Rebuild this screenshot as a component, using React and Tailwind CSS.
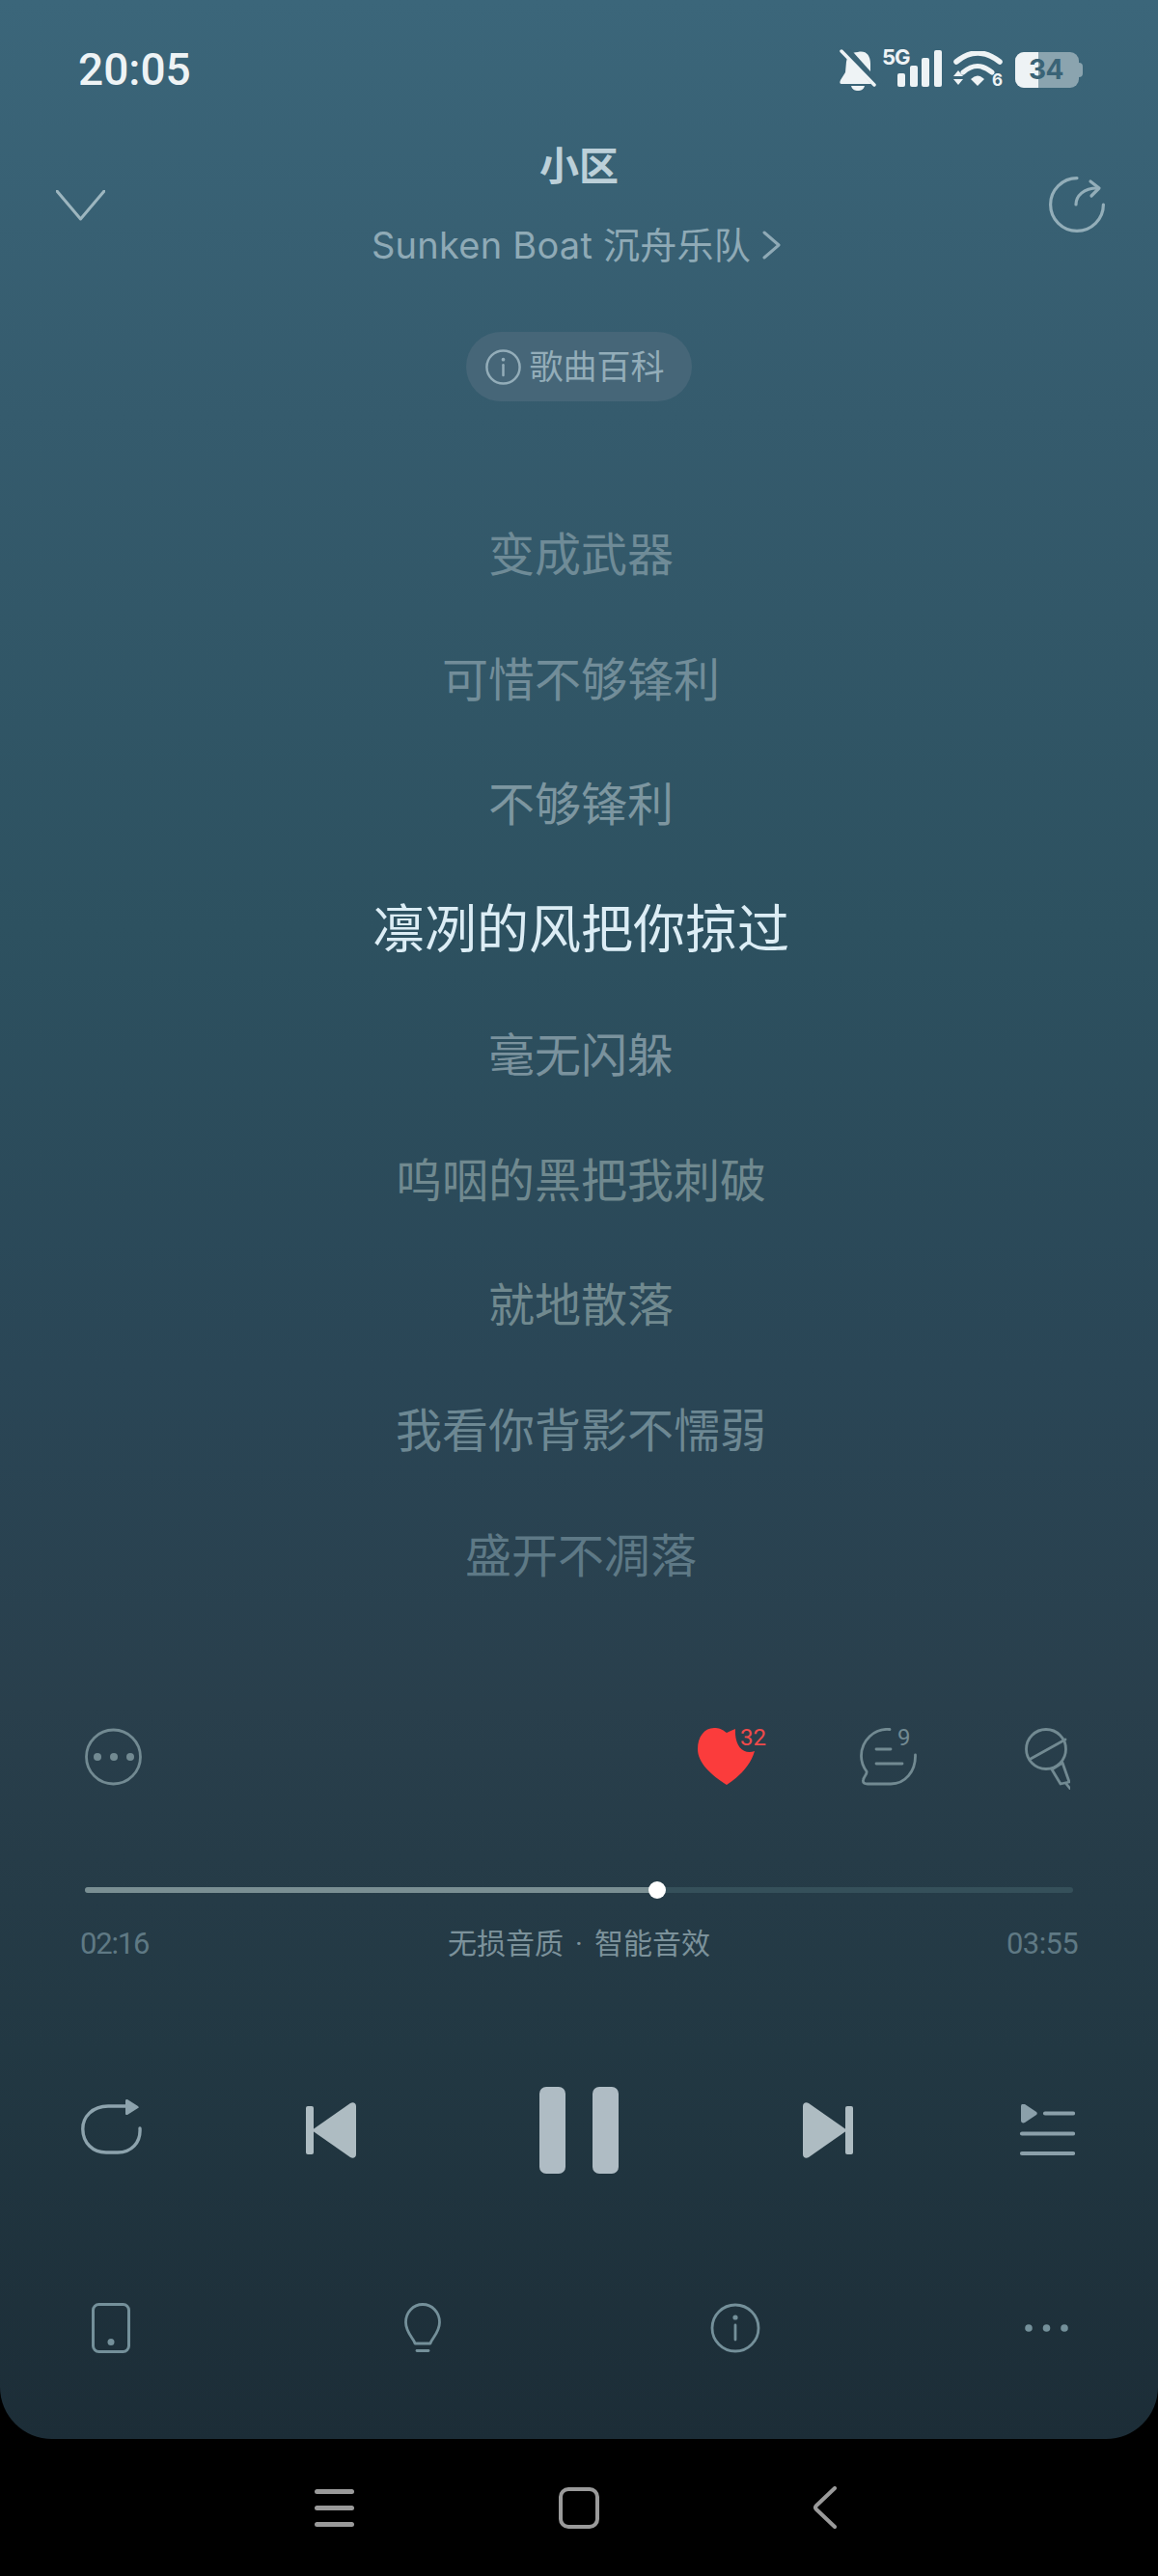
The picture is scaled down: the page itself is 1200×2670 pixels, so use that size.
import React from "react";

const FONT = "font-['Inter','Noto_Sans_CJK_SC',sans-serif]";

function BellOff() {
  return (
    <svg width="38" height="43" viewBox="0 0 38 43">
      <path d="M19 3C27 1 32 6 32 15L32 28L36 36L2 36C0 36 0 34 1 32L6 24L7 13C8 7 12 3 19 3Z" fill="#eef3f5" />
      <path d="M6 0L41 39" stroke="#3a6376" strokeWidth="8" />
      <path d="M2 2L36 37" stroke="#eef3f5" strokeWidth="3.5" strokeLinecap="round" />
      <path d="M12 38L26 38C25 42 22 43 19 43C16 43 13 42 12 38Z" fill="#eef3f5" />
    </svg>
  );
}

function Signal() {
  return (
    <div className="relative w-[62px] h-[40px]">
      <span className="absolute left-0 top-[-6px] text-[22px] leading-[26px] font-bold text-[#eef3f5] tracking-[-1px]">5G</span>
      <svg className="absolute left-0 top-0" width="62" height="40" viewBox="0 0 62 40">
        <rect x="16" y="24" width="8" height="14" rx="2" fill="#eef3f5" />
        <rect x="29" y="16" width="8" height="22" rx="2" fill="#eef3f5" />
        <rect x="41" y="8" width="8" height="30" rx="2" fill="#eef3f5" />
        <rect x="54" y="0" width="8" height="38" rx="2" fill="#eef3f5" />
      </svg>
    </div>
  );
}

function Wifi() {
  return (
    <div className="relative w-[51px] h-[38px]">
      <svg className="absolute left-0 top-0" width="51" height="38" viewBox="0 0 51 38">
        <path d="M3 11Q25 -7 48 11" fill="none" stroke="#eef3f5" strokeWidth="5.5" strokeLinecap="round" />
        <path d="M10 22Q25 9 40 22" fill="none" stroke="#eef3f5" strokeWidth="5" strokeLinecap="round" />
        <path d="M18 29Q25 22 32 29L25 36Z" fill="#eef3f5" />
        <path d="M5 20L10 26L0 26Z" fill="#eef3f5" />
        <path d="M0 29L10 29L5 35Z" fill="#eef3f5" />
      </svg>
      <span className="absolute left-[40px] top-[22px] text-[17px] leading-[17px] font-bold text-[#eef3f5]">6</span>
    </div>
  );
}

function Battery() {
  return (
    <div className="flex items-center">
      <div className="relative w-[66px] h-[37px] rounded-[9px] overflow-hidden bg-[#8ba4af] flex">
        <div className="w-[24px] h-full bg-[#eef3f5]" />
        <span className="absolute left-[14px] top-0 h-full flex items-center text-[28px] font-bold text-[#3a6376] tracking-[-0.5px]">34</span>
      </div>
      <div className="w-[4px] h-[15px] rounded-r-[4px] bg-[#8ba4af]" />
    </div>
  );
}

function Chevron() {
  return (
    <svg width="51" height="32" viewBox="0 0 51 32">
      <path d="M1 1L25.5 30L50 1" fill="none" stroke="#9db6bf" strokeWidth="3" strokeLinecap="round" strokeLinejoin="round" />
    </svg>
  );
}

function Share() {
  return (
    <svg width="58" height="58" viewBox="0 0 58 58" fill="none" stroke="#93aeb9" strokeWidth="3.2" strokeLinecap="round" strokeLinejoin="round">
      <path d="M29 1.6A27.4 27.4 0 1 0 56.4 29" />
      <path d="M28 29C28 20 36 12 50 12" />
      <path d="M43 5L52 12L44 20" />
    </svg>
  );
}

function Info({ size, color, sw }) {
  return (
    <svg width={size} height={size} viewBox="0 0 52 52" fill="none" stroke={color} strokeWidth={sw} strokeLinecap="round">
      <circle cx="26" cy="26" r="24" />
      <circle cx="26" cy="15" r="2.6" fill={color} stroke="none" />
      <path d="M26 23L26 38" />
    </svg>
  );
}

function More() {
  return (
    <svg width="59" height="60" viewBox="0 0 59 60">
      <circle cx="29.5" cy="30" r="28" fill="none" stroke="#728a92" strokeWidth="2.8" />
      <circle cx="13" cy="30" r="4" fill="#728a92" />
      <circle cx="30" cy="30" r="4" fill="#728a92" />
      <circle cx="47" cy="30" r="4" fill="#728a92" />
    </svg>
  );
}

function Heart() {
  return (
    <div className="relative w-[70px] h-[60px]">
      <svg className="absolute left-0 top-0" width="60" height="60" viewBox="0 0 60 60">
        <path d="M30 5C25 1 22 0 17 0C7 0 0 9 0 22C0 36 14 49 30 59C44 50 55 38 59 24C48 28 38 20 39 1Q34 3 30 5Z" fill="#fb3c3c" />
      </svg>
      <span className="absolute left-[44px] top-[-2px] text-[24px] leading-[24px] text-[#f04a4a] font-['Roboto',sans-serif]">32</span>
    </div>
  );
}

function Comment() {
  return (
    <div className="relative w-[59px] h-[60px]">
      <svg className="absolute left-0 top-0" width="59" height="60" viewBox="0 0 59 60" fill="none" stroke="#728a92" strokeWidth="2.8" strokeLinecap="round" strokeLinejoin="round">
        <path d="M31 1.5C15 0 1.5 13 1.5 29C1.5 36 4 41 7 45C8 48 4 50 3.5 54C3 57 5 58 8 58L32 58C47 58 58 45 57.5 28" />
        <path d="M17 22L32 22" />
        <path d="M17 37L44 37" />
      </svg>
      <span className="absolute left-[39px] top-[-2px] text-[24px] leading-[24px] text-[#728a92] font-['Roboto',sans-serif]">9</span>
    </div>
  );
}

function Mic() {
  return (
    <svg width="47" height="64" viewBox="0 0 47 64" fill="none" stroke="#728a92" strokeWidth="2.8" strokeLinecap="round" strokeLinejoin="round">
      <circle cx="22" cy="22" r="20.5" />
      <path d="M6 32L42 12" />
      <path d="M28 43L39 36L46 56L37 58Z" />
      <path d="M43 58L47 63" />
    </svg>
  );
}

function Repeat() {
  return (
    <svg width="63" height="57" viewBox="0 0 63 57">
      <path d="M47 7L28 7C12 7 1.5 18 1.8 31C2 45 12 55 26 55L38 55C52 55 62 45 61 30" fill="none" stroke="#8da3ad" strokeWidth="3.4" strokeLinecap="round" />
      <path d="M46 1C46 0 47 0 48 0L59 7C60 8 60 9 59 9L48 16C47 16 46 16 46 15Z" fill="#8da3ad" />
    </svg>
  );
}

function Prev() {
  return (
    <svg width="52" height="58" viewBox="0 0 52 58" fill="#aebcc2">
      <rect x="0" y="4" width="8" height="50" rx="2" />
      <path d="M6 29L46 1C49 -1 52 1 52 4L52 54C52 57 49 59 46 57Z" />
    </svg>
  );
}

function Next() {
  return (
    <svg width="52" height="58" viewBox="0 0 52 58" fill="#aebcc2">
      <rect x="44" y="4" width="8" height="50" rx="2" />
      <path d="M46 29L6 1C3 -1 0 1 0 4L0 54C0 57 3 59 6 57Z" />
    </svg>
  );
}

function Queue() {
  return (
    <svg width="58" height="54" viewBox="0 0 58 54">
      <path d="M2 2C2 0 4 -1 6 0L18 8C19 9 19 10 18 11L6 19C4 20 2 19 2 17Z" fill="#8ba0aa" />
      <g stroke="#8ba0aa" strokeWidth="4.2" strokeLinecap="round">
        <path d="M27 9.5L56 9.5" />
        <path d="M3 30.5L56 30.5" />
        <path d="M3 51L56 51" />
      </g>
    </svg>
  );
}

function Phone() {
  return (
    <svg width="40" height="52" viewBox="0 0 40 52">
      <rect x="1.5" y="1.5" width="37" height="49" rx="6" fill="none" stroke="#74909a" strokeWidth="3" />
      <circle cx="20" cy="40.5" r="3.5" fill="#74909a" />
    </svg>
  );
}

function Bulb() {
  return (
    <svg width="38" height="52" viewBox="0 0 38 52" fill="none" stroke="#74909a" strokeWidth="2.8" strokeLinecap="round" strokeLinejoin="round">
      <path d="M11 42C10 37 1.5 31 1.5 20C1.5 10 9 1.5 19 1.5C29 1.5 36.5 10 36.5 20C36.5 31 28 37 27 42Z" />
      <path d="M13 49.5L25 49.5" />
    </svg>
  );
}

function Dots() {
  return (
    <svg width="45" height="10" viewBox="0 0 45 10" fill="#74909a">
      <circle cx="4" cy="5" r="3.8" />
      <circle cx="22.5" cy="5" r="3.8" />
      <circle cx="41" cy="5" r="3.8" />
    </svg>
  );
}

const lyrics = [
  { t: "变成武器", c: "text-[#6f8b97]" },
  { t: "可惜不够锋利", c: "text-[#728d99]" },
  { t: "不够锋利", c: "text-[#7d96a0]" },
  { t: "凛冽的风把你掠过", c: "text-[#dcedf5] text-[54px]" },
  { t: "毫无闪躲", c: "text-[#7a929d]" },
  { t: "呜咽的黑把我刺破", c: "text-[#70898f]" },
  { t: "就地散落", c: "text-[#70898f]" },
  { t: "我看你背影不懦弱", c: "text-[#6d8893]" },
  { t: "盛开不凋落", c: "text-[#5e7986]" },
];

export default function App() {
  return (
    <div className={`w-[1200px] h-[2670px] bg-black flex flex-col overflow-hidden ${FONT}`}>
      <div className="h-[2528px] shrink-0 rounded-b-[54px] flex flex-col bg-[linear-gradient(180deg,#3b667a_0%,#355b6d_17%,#2d5160_38%,#2a4656_56%,#293f4c_70%,#223843_84%,#1c2d37_100%)]">
        {/* status bar */}
        <div className="h-[144px] shrink-0 flex items-center pl-[81px] pr-[78px]">
          <span className="text-[46px] font-medium text-[#eef3f5] font-['Roboto',sans-serif]">20:05</span>
          <div className="ml-auto"><BellOff /></div>
          <div className="ml-[6px]"><Signal /></div>
          <div className="ml-[12px]"><Wifi /></div>
          <div className="ml-[13px]"><Battery /></div>
        </div>

        {/* header */}
        <div className="flex items-start">
          <div className="w-[200px] pl-[58px] pt-[53px]"><Chevron /></div>
          <div className="flex-1 flex flex-col items-center">
            <div className="h-[56px] flex items-center text-[41px] font-bold text-[#bcd0d9] leading-none">小区</div>
            <div className="h-[108px] flex items-center gap-[12px] pr-[5px] text-[38px] tracking-[0.25px] text-[#8faab6] leading-none">
              <span>Sunken Boat 沉舟乐队</span>
              <svg width="20" height="30" viewBox="0 0 20 30">
                <path d="M2 2L17 15L2 28" fill="none" stroke="#8faab6" strokeWidth="3" strokeLinecap="round" strokeLinejoin="round" />
              </svg>
            </div>
          </div>
          <div className="w-[200px] flex justify-end pr-[55px] pt-[39px]"><Share /></div>
        </div>

        {/* pill */}
        <div className="flex justify-center mt-[36px]">
          <div className="w-[234px] h-[72px] pr-[8px] rounded-full bg-[#466678] flex items-center justify-center gap-[8px] text-[35px] text-[#93adb9] leading-none">
            <Info size={37} color="#93adb9" sw={3.5} />
            <span>歌曲百科</span>
          </div>
        </div>

        {/* lyrics */}
        <div className="mt-[94px] flex flex-col pl-[4px]">
          {lyrics.map((l) => (
            <div key={l.t} className={`h-[129.75px] flex items-center justify-center text-[48px] leading-none ${l.c}`}>
              {l.t}
            </div>
          ))}
        </div>

        {/* action row */}
        <div className="mt-[113px] h-[65px] flex items-start pl-[88px] pr-[91px]">
          <More />
          <div className="ml-auto"><Heart /></div>
          <div className="ml-[98px]"><Comment /></div>
          <div className="ml-[112px]"><Mic /></div>
        </div>

        {/* progress */}
        <div className="mt-[94px] mx-[88px] h-[18px] relative flex items-center">
          <div className="w-full h-[6px] rounded-full bg-[#35505a] overflow-hidden">
            <div className="w-[593px] h-full bg-[#7a8f93]" />
          </div>
          <div className="absolute left-[584px] top-0 w-[18px] h-[18px] rounded-full bg-white" />
        </div>

        {/* time row */}
        <div className="mt-[32px] h-[30px] flex items-center justify-between pl-[83px] pr-[83px] text-[#5f7984] font-['Roboto','Noto_Sans_CJK_SC',sans-serif]">
          <span className="w-[74px] text-[31px] tracking-[-1.2px] leading-none">02:16</span>
          <span className="text-[30px] leading-none text-[#7c929b] flex gap-[12px]">
            <span>无损音质</span>
            <span>·</span>
            <span>智能音效</span>
          </span>
          <span className="w-[74px] text-[31px] tracking-[-0.6px] leading-none">03:55</span>
        </div>

        {/* transport */}
        <div className="mt-[133px] h-[90px] flex items-center pl-[84px]">
          <div className="-mt-[7px]"><Repeat /></div>
          <div className="ml-[170px]"><Prev /></div>
          <div className="ml-[190px] flex gap-[28px]">
            <div className="w-[27px] h-[90px] rounded-[7px] bg-[#afbcc4]" />
            <div className="w-[27px] h-[90px] rounded-[7px] bg-[#afbcc4]" />
          </div>
          <div className="ml-[191px]"><Next /></div>
          <div className="ml-[172px]"><Queue /></div>
        </div>

        {/* bottom tools */}
        <div className="mt-[134px] h-[52px] flex items-center pl-[95px]">
          <Phone />
          <div className="ml-[284px]"><Bulb /></div>
          <div className="ml-[279px]"><Info size={52} color="#74909a" sw={2.8} /></div>
          <div className="ml-[274px]"><Dots /></div>
        </div>
      </div>

      {/* nav */}
      <div className="flex-1 flex items-center pl-[326px]">
        <div className="w-[41px] flex flex-col gap-[12px]">
          <div className="h-[5px] rounded-full bg-[#9a9a9a]" />
          <div className="h-[5px] rounded-full bg-[#9a9a9a]" />
          <div className="h-[5px] rounded-full bg-[#9a9a9a]" />
        </div>
        <div className="ml-[212px] w-[42px] h-[43px] rounded-[10px] border-[4px] border-[#9a9a9a]" />
        <svg className="ml-[221px]" width="25" height="44" viewBox="0 0 25 44">
          <path d="M23 2L4 20C2.5 21.5 2.5 22.5 4 24L23 42" fill="none" stroke="#9a9a9a" strokeWidth="4" strokeLinecap="round" strokeLinejoin="round" />
        </svg>
      </div>
    </div>
  );
}
